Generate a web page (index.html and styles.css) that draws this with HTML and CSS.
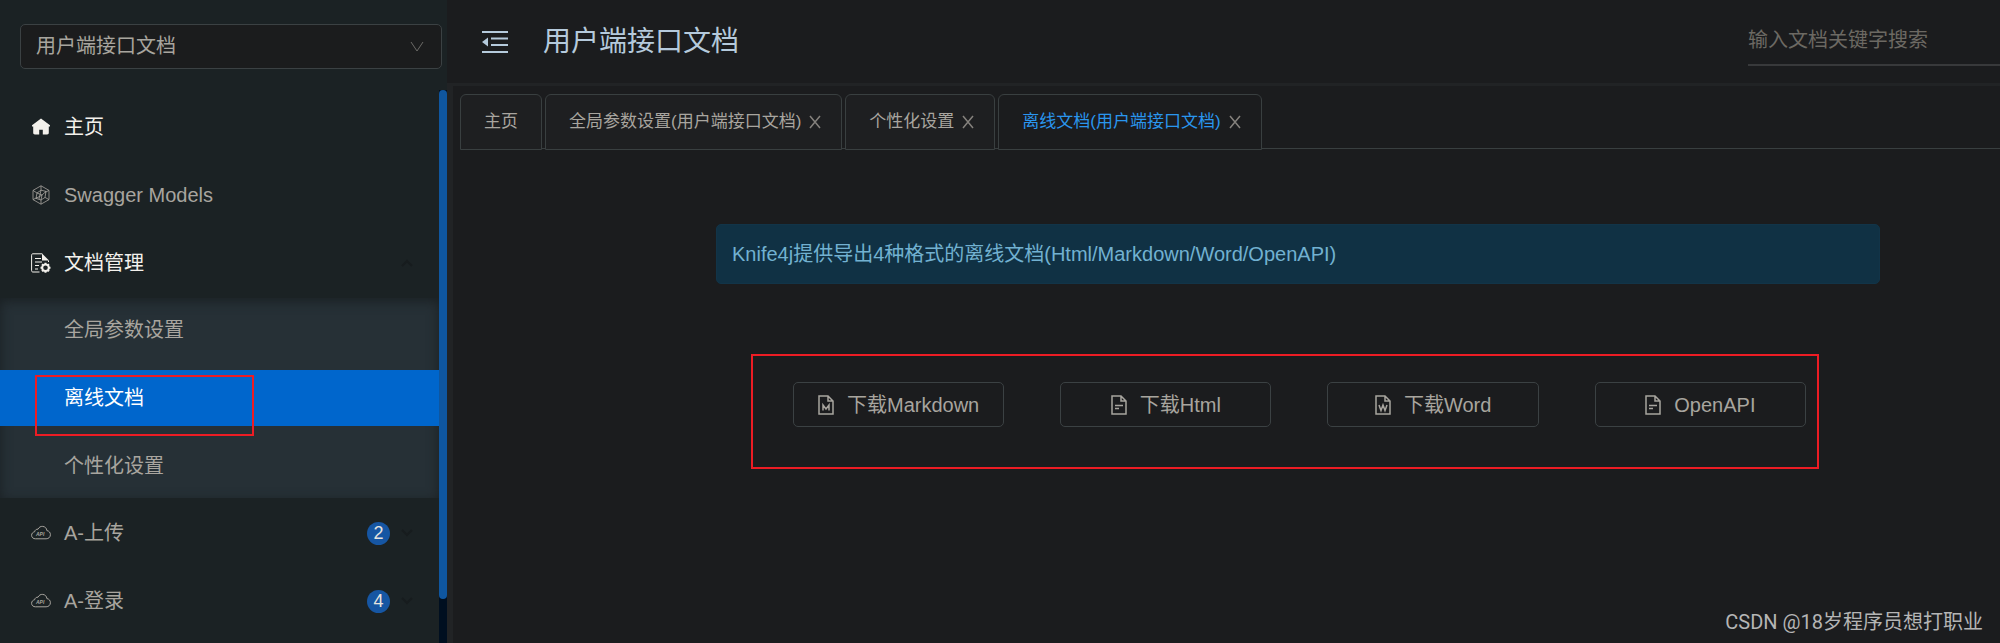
FILE: index.html
```html
<!DOCTYPE html>
<html lang="zh-CN">
<head>
  <meta charset="UTF-8" />
  <meta name="viewport" content="width=device-width, initial-scale=1.0" />
  <title>用户端接口文档</title>
  <link rel="stylesheet" href="styles.css">
</head>
<body>
  <aside class="sidebar">
    <div class="project">
      <select class="project-select" aria-label="文档分组">
        <option>用户端接口文档</option>
      </select>
      <svg class="project-arrow" viewBox="0 0 14 12"><path d="M1 1l6 9 6-9" /></svg>
    </div>
    <div class="sidebar-body">
      <nav class="menu">
        <a class="item strong" href="#home">
          <svg class="icon" viewBox="0 0 20 20"><path class="solid" d="M10 1.5L1 8.3v1.2h1.2v6.3c0 1.2.6 1.7 1.7 1.7h4.3v-4.7h3.6v4.7h4.3c1.1 0 1.7-.5 1.7-1.7V9.5H19V8.3z" /></svg>
          <span>主页</span>
        </a>
        <a class="item" href="#models">
          <svg class="icon thin" viewBox="0 0 20 20"><path d="M10 .8l8 4.6v9.2l-8 4.6-8-4.6V5.4zM10 .8v4.4M2 5.4l4 2.6M18 5.4l-4 2M18 14.6l-4-2.2M10 19.2V15M2 14.6l4-2M6 8l4-2.8 5 1.2-1 6L10 15l-5-1.600zM6 8l5 2 4-3.600M11 10l-1 5M11 10l-6 3.400M10 5.200L8 14" /></svg>
          <span>Swagger Models</span>
        </a>
        <a class="item strong" href="#docs">
          <svg class="icon" viewBox="0 0 20 20">
            <path d="M8.5 19H2c-1 0-1.4-.5-1.4-1.4V2.2C.6 1.300 1 .8 2 .8h9.200M4 5.500h6M4 9h7M4 12.500h4M4 16h3M17.500 7.500V9" />
            <path class="solid" d="M11 .5l7 7h-7z" />
            <circle class="gear" cx="14.5" cy="14.8" r="3.3" />
            <path class="teeth" d="M14.5 9.8v1.6M14.5 18.2v1.6M9.5 14.8h1.6M17.9 14.8h1.6M11 11.3l1.1 1.1M16.9 17.2l1.1 1.1M18 11.3l-1.1 1.1M12.1 17.2L11 18.3" />
          </svg>
          <span>文档管理</span>
          <svg class="arrow" viewBox="0 0 12 8"><path d="M1 7l5-5 5 5" /></svg>
        </a>
        <div class="submenu">
          <a class="item" href="#global">全局参数设置</a>
          <a class="item active" href="#offline">离线文档<i class="mark"></i></a>
          <a class="item" href="#settings">个性化设置</a>
        </div>
        <a class="item" href="#upload">
          <svg class="icon" viewBox="0 0 20 20"><path d="M4.5 15.8C2.3 15.8.6 14.5.6 12.3c0-1.9 1.3-3.2 3-3.5C4 7 5.3 6 7 6.2 8 4.1 9.7 3.2 11.7 3.4c2.3.2 3.9 1.7 4.2 4.2 2.2.3 3.5 2 3.5 4.1 0 2.4-1.8 4.1-4.3 4.1z" /><text x="5" y="12.5">API</text></svg>
          <span>A-上传</span>
          <b class="badge">2</b>
          <svg class="arrow" viewBox="0 0 12 8"><path d="M1 1l5 5 5-5" /></svg>
        </a>
        <a class="item" href="#login">
          <svg class="icon" viewBox="0 0 20 20"><path d="M4.5 15.8C2.3 15.8.6 14.5.6 12.3c0-1.9 1.3-3.2 3-3.5C4 7 5.3 6 7 6.2 8 4.1 9.7 3.2 11.7 3.4c2.3.2 3.9 1.7 4.2 4.2 2.2.3 3.5 2 3.5 4.1 0 2.4-1.8 4.1-4.3 4.1z" /><text x="5" y="12.5">API</text></svg>
          <span>A-登录</span>
          <b class="badge">4</b>
          <svg class="arrow" viewBox="0 0 12 8"><path d="M1 1l5 5 5-5" /></svg>
        </a>
      </nav>
      <div class="track"><div class="thumb"></div></div>
    </div>
  </aside>

  <div class="main">
    <header class="header">
      <button class="fold" type="button" aria-label="收起菜单">
        <svg viewBox="0 0 26 24"><path d="M0 2h26M9 8.5h17M9 15h17M0 22h26" /><path class="solid" d="M0 12l6-4.5v9z" /></svg>
      </button>
      <h1>用户端接口文档</h1>
      <input class="search" type="text" placeholder="输入文档关键字搜索" aria-label="搜索">
    </header>

    <div class="content">
      <div class="tabs">
        <div class="tab"><a href="#home">主页</a></div>
        <div class="tab closable">
          <a href="#global">全局参数设置(用户端接口文档)</a>
          <button class="close" type="button" aria-label="关闭"><svg viewBox="0 0 12 14"><path d="M1 1l10 12M11 1L1 13" /></svg></button>
        </div>
        <div class="tab closable">
          <a href="#settings">个性化设置</a>
          <button class="close" type="button" aria-label="关闭"><svg viewBox="0 0 12 14"><path d="M1 1l10 12M11 1L1 13" /></svg></button>
        </div>
        <div class="tab closable current">
          <a href="#offline">离线文档(用户端接口文档)</a>
          <button class="close" type="button" aria-label="关闭"><svg viewBox="0 0 12 14"><path d="M1 1l10 12M11 1L1 13" /></svg></button>
        </div>
      </div>

      <div class="offline">
        <p class="alert">Knife4j提供导出4种格式的离线文档(Html/Markdown/Word/OpenAPI)</p>
        <div class="downloads">
          <button class="download" type="button">
            <svg viewBox="0 0 16 20"><path d="M1 1h9l5 5v13H1zM10 1v5h5M5 15.5V10l3 4 3-4v5.5" /></svg>
            下载Markdown
          </button>
          <button class="download" type="button">
            <svg viewBox="0 0 16 20"><path d="M1 1h9l5 5v13H1zM10 1v5h5M4 10.5h8M4 13.5h4" /></svg>
            下载Html
          </button>
          <button class="download" type="button">
            <svg viewBox="0 0 16 20"><path d="M1 1h9l5 5v13H1zM10 1v5h5M4 10l2 5.5L8 10l2 5.5 2-5.5" /></svg>
            下载Word
          </button>
          <button class="download" type="button">
            <svg viewBox="0 0 16 20"><path d="M1 1h9l5 5v13H1zM10 1v5h5M4 10.5h8M4 13.5h4" /></svg>
            OpenAPI
          </button>
        </div>
      </div>
      <footer class="credit">CSDN @18岁程序员想打职业</footer>
    </div>
  </div>
</body>
</html>
```
FILE: styles.css
```css
* {
  box-sizing: border-box;
}
body {
  margin: 0;
  min-height: 100vh;
  display: flex;
  background: #1b1c1e;
  color: #a8a59f;
  font-family: "Liberation Sans", "Noto Sans CJK SC", sans-serif;
  font-size: 20px;
  line-height: 28px;
}
a {
  color: inherit;
  text-decoration: none;
}
button,
input,
select {
  font: inherit;
  color: inherit;
}
svg {
  fill: none;
  stroke: currentColor;
  flex: none;
}
svg .solid {
  fill: currentColor;
  stroke: none;
}

/* sidebar */
.sidebar {
  flex: 0 0 447px;
  display: flex;
  flex-direction: column;
  background: #1b2224;
}
.project {
  position: relative;
  margin: 24px 5px 21px 20px;
}
.project-select {
  display: block;
  width: 100%;
  height: 45px;
  padding: 0 15px 2px;
  appearance: none;
  background: #1b1c1d;
  border: 1px solid #3b4143;
  border-radius: 5px;
}
.project-arrow {
  position: absolute;
  right: 18px;
  top: 17px;
  width: 14px;
  height: 12px;
  color: #6b6a67;
  pointer-events: none;
}
.sidebar-body {
  flex: 1;
  display: flex;
}
.menu {
  flex: 1;
  padding-top: 9px;
}
.item {
  display: flex;
  align-items: center;
  height: 56px;
  padding: 0 26px 0 31px;
  margin-bottom: 12px;
}
.item.strong {
  color: #f3f1ec;
}
.icon {
  width: 20px;
  height: 20px;
  margin-right: 13px;
}
.icon text {
  font-size: 5px;
  font-style: italic;
  font-weight: bold;
  fill: currentColor;
  stroke: none;
}
.thin {
  stroke-width: 0.8;
}
.gear,
.teeth {
  stroke-width: 2;
}
.badge {
  width: 23px;
  height: 23px;
  margin-left: auto;
  border-radius: 50%;
  background: #1656a3;
  color: #e6e4df;
  font-size: 18px;
  font-weight: normal;
  line-height: 23px;
  text-align: center;
}
.arrow {
  width: 12px;
  height: 8px;
  margin-left: auto;
  color: #171c1e;
  stroke-width: 2;
}
.badge + .arrow {
  margin-left: 11px;
}
.submenu {
  display: flex;
  flex-direction: column;
  gap: 12px;
  margin: -5px 0 7px;
  padding: 4px 0;
  background: #263036;
  box-shadow: inset 0 3px 12px #1a2023;
}
.submenu .item {
  margin: 0;
  padding-left: 64px;
}
.submenu .active {
  position: relative;
  background: #0066cc;
  color: #fff;
}
.mark {
  position: absolute;
  left: 35px;
  top: 5px;
  width: 219px;
  height: 61px;
  border: 2px solid #ed1c24;
}
.track {
  width: 8px;
  background: #000f20;
}
.thumb {
  height: 92%;
  border-radius: 4px;
  background: #0f569f;
}

/* header */
.main {
  flex: 1;
  min-width: 0;
  display: flex;
  flex-direction: column;
}
.header {
  display: flex;
  align-items: center;
  height: 86px;
  padding-left: 35px;
  border-bottom: 3px solid #212325;
  color: #b5cadc;
}
.fold {
  display: flex;
  padding: 0;
  border: 0;
  background: none;
}
.fold svg {
  width: 26px;
  height: 24px;
  stroke-width: 2;
}
h1 {
  margin: 0 auto 0 35px;
  font-size: 28px;
  font-weight: normal;
  line-height: 40px;
}
.search {
  width: 252px;
  height: 48px;
  padding: 0;
  border: 0;
  border-bottom: 2px solid #38393b;
  background: none;
}
.search::placeholder {
  color: #6c6963;
}

/* tabs */
.content {
  flex: 1;
  display: flex;
  flex-direction: column;
  border-left: 6px solid #212325;
}
.tabs {
  display: flex;
  gap: 3px;
  margin: 8px 0 0 7px;
  border-bottom: 1px solid #393f40;
}
.tab {
  display: flex;
  align-items: center;
  gap: 8px;
  height: 56px;
  margin-bottom: -2px;
  padding: 0 23px;
  background: #1e1f21;
  border: 1px solid #393f40;
  border-radius: 6px 6px 0 0;
  font-size: 17px;
}
.tab.closable {
  padding-right: 20px;
}
.tab.current {
  background: #1b1c1e;
}
.tab.current a {
  color: #2a96ee;
}
.close {
  display: flex;
  padding: 0;
  border: 0;
  background: none;
  color: #85827d;
}
.close svg {
  width: 12px;
  height: 14px;
  stroke-width: 1.5;
}

/* offline documents */
.offline {
  margin: 75px 120px 0 17%;
}
.alert {
  margin: 0;
  padding: 15px;
  border: 1px solid #123448;
  border-radius: 5px;
  background: #103144;
  color: #72b1d1;
}
.downloads {
  display: grid;
  grid-template-columns: repeat(4, 1fr);
  gap: 56px;
  margin: 70px 61px 0 35px;
  padding: 26px 11px 40px 40px;
  border: 2px solid #ed1c24;
}
.download {
  display: flex;
  align-items: center;
  justify-content: center;
  gap: 13px;
  height: 45px;
  padding: 0;
  border: 1px solid #3b4143;
  border-radius: 5px;
  background: none;
  white-space: nowrap;
}
.download svg {
  width: 16px;
  height: 20px;
  stroke-width: 1.5;
}
.credit {
  margin: auto 17px 7px auto;
  color: #b5b5b5;
  font-family: Roboto, "Noto Sans CJK SC", sans-serif;
}
```
